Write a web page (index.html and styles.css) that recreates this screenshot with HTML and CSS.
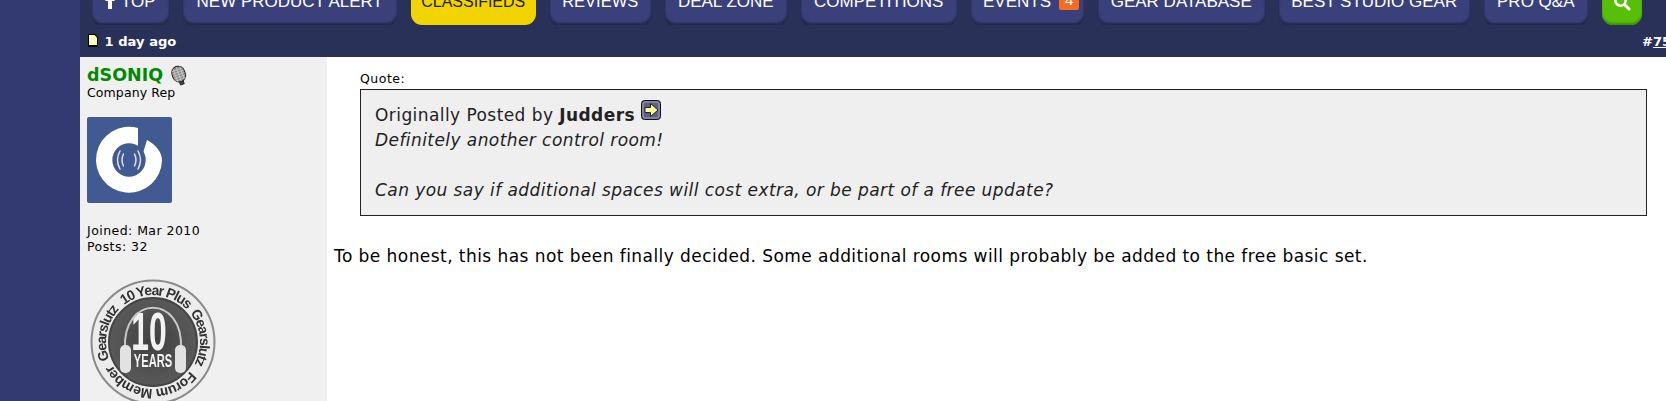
FILE: index.html
```html
<!DOCTYPE html>
<html>

<head>
  <meta charset="utf-8">
  <title>Post</title>
  <link rel="stylesheet" href="styles.css">
</head>

<body>
  <div class="page">
    <nav class="nav">
      <a class="nav-btn nav-top"><svg class="top-arrow" width="10" height="14" viewBox="0 0 10 14"><path d="M5 0 10 6H7V14H3V6H0Z" fill="#fff" /></svg> TOP</a>
      <a class="nav-btn nav-alert">NEW PRODUCT ALERT</a>
      <a class="nav-btn nav-yellow nav-class">CLASSIFIEDS</a>
      <a class="nav-btn nav-reviews">REVIEWS</a>
      <a class="nav-btn nav-deal">DEAL ZONE</a>
      <a class="nav-btn nav-comp">COMPETITIONS</a>
      <a class="nav-btn nav-events">EVENTS <span class="badge">4</span></a>
      <a class="nav-btn nav-gear">GEAR DATABASE</a>
      <a class="nav-btn nav-best">BEST STUDIO GEAR</a>
      <a class="nav-btn nav-pro">PRO Q&amp;A</a>
      <a class="nav-btn nav-search">
        <svg width="18" height="18" viewBox="0 0 18 18"><circle cx="7.5" cy="7.5" r="5.2" fill="none" stroke="#fff" stroke-width="2.6" /><path d="M11.5 11.5 16 16" stroke="#fff" stroke-width="3" stroke-linecap="round" /></svg>
      </a>
    </nav>

    <div class="post-head">
      <span class="post-date">
        <svg width="10" height="13" viewBox="0 0 10 13"><path d="M0 0H7L10 3V13H0Z" fill="#000" /><path d="M1 1H6.500L9 3.500V11H1Z" fill="#ffffb8" /></svg>
        1 day ago
      </span>
      <span class="post-num">#<a>75</a></span>
    </div>

    <div class="post-body">
      <aside class="user">
        <div class="user-name">
          <a>dSONIQ</a>
          <svg class="mic" width="18" height="21" viewBox="0 0 18 21">
            <g transform="rotate(-20 9 10)">
              <rect x="7" y="16" width="4" height="4" fill="#444" stroke="#111" stroke-width=".7" />
              <rect x="2.500" y="1" width="13" height="16" rx="6.500" fill="#8c8c8c" stroke="#222" />
              <path d="M3 4.500H15M3 7H15M3 9.500H15M3 12H15M3 14.500H15M5.500 2V16M9 1.500V16.500M12.500 2V16" stroke="#d8d8d8" stroke-width=".6" />
            </g>
          </svg>
        </div>
        <div class="user-title">Company Rep</div>
        <div class="avatar">
          <svg width="85" height="86" viewBox="0 0 85 86">
            <rect width="85" height="86" rx="2" fill="#415a92" />
            <path d="M51 11V36H56L60 23C68 27 75 35 75 43A33 33 0 1 1 51 11Z" fill="#fff" />
            <circle cx="42" cy="43" r="16.700" fill="#415a92" />
            <path d="M36.500 37Q33.500 43 36.500 49M47.500 37Q50.500 43 47.500 49M33 34Q28 43 33 52M51 34Q56 43 51 52" fill="none" stroke="#dfe4ee" stroke-width="1.500" stroke-linecap="round" />
          </svg>
        </div>
        <div class="user-stats">
          <div>Joined: Mar 2010</div>
          <div>Posts: 32</div>
        </div>
        <svg class="award" width="128" height="128" viewBox="0 0 128 128">
          <defs>
            <path id="ring" d="M64 17A47 47 0 1 1 63.990 17" />
            <filter id="soft"><feGaussianBlur stdDeviation=".45" /></filter>
            <radialGradient id="disc">
              <stop offset="0" stop-color="#3f3f3f" />
              <stop offset="1" stop-color="#5a5a5a" />
            </radialGradient>
          </defs>
          <g filter="url(#soft)">
            <circle cx="64" cy="64" r="61.500" fill="#ececec" stroke="#8a8a8a" stroke-width="2" />
            <circle cx="64" cy="64" r="44" fill="url(#disc)" stroke="#444" stroke-width="2" />
            <g transform="rotate(-38 64 64)"><text class="award-ring"><textPath href="#ring">10 Year Plus</textPath></text></g>
            <g transform="rotate(52 64 64)"><text class="award-ring"><textPath href="#ring">Gearslutz</textPath></text></g>
            <g transform="rotate(128 64 64)"><text class="award-ring award-ring-low"><textPath href="#ring">Forum Member</textPath></text></g>
            <g transform="rotate(248 64 64)"><text class="award-ring"><textPath href="#ring">Gearslutz</textPath></text></g>
            <path d="M36 71C33 16 95 16 92 71" fill="none" stroke="#c8c8c8" stroke-width="2" />
            <rect x="31" y="67" width="11" height="28" rx="5" fill="#e2e2e2" />
            <rect x="86" y="67" width="11" height="28" rx="5" fill="#e2e2e2" />
            <text class="award-ten" transform="translate(60 72) scale(.6 1)" text-anchor="middle">10</text>
            <text class="award-years" transform="translate(64 89) scale(.62 1)" text-anchor="middle">YEARS</text>
          </g>
        </svg>
      </aside>

      <main class="content">
        <div class="quote">
          <div class="quote-label">Quote:</div>
          <div class="quote-box">
            <div>Originally Posted by <b>Judders</b>
              <svg class="view-post" width="20" height="20" viewBox="0 0 20 20">
                <rect x=".5" y=".5" width="19" height="19" rx="3" fill="#5f5f82" stroke="#111" />
                <rect x="2" y="2" width="16" height="16" rx="2" fill="none" stroke="#a2a2c4" />
                <path d="M4 7.500H9.500V3.500L17 10 9.500 16.500V12.500H4Z" fill="#ffff99" stroke="#222" />
              </svg>
            </div>
            <div class="quote-text">Definitely another control room!</div>
            <br>
            <div class="quote-text">Can you say if additional spaces will cost extra, or be part of a free update?</div>
          </div>
        </div>
        <p class="message">To be honest, this has not been finally decided. Some additional rooms will probably be added to the free basic set.</p>
      </main>
    </div>
  </div>
</body>

</html>
```

FILE: styles.css
```css
body {
  margin: 0;
  overflow: hidden;
  background: linear-gradient(90deg, #333a72, #3a437f);
  font-family: "DejaVu Sans", Verdana, sans-serif;
  color: #000;
}

.page {
  margin-left: 80px;
  height: 100vh;
  display: flex;
  flex-direction: column;
  overflow: hidden;
  background: #fff;
}

/* the page is scrolled, so the buttons are cut by the top of the window */
.nav {
  flex: none;
  height: 47px;
  margin-top: -22px;
  padding-left: 12px;
  display: flex;
  gap: 14.5px;
  background: #2a3159;
}

.nav-btn {
  box-sizing: border-box;
  flex: none;
  display: flex;
  align-items: center;
  justify-content: center;
  gap: 5px;
  border-radius: 0 0 11px 11px;
  background: #3a407a;
  box-shadow: inset 0 -2px 2px #23294d, 0 1px 1px #1d2344;
  color: #fff;
  font: 17px "Liberation Sans", Arial, sans-serif;
}

.nav-top { width: 76.5px; }
.nav-alert { width: 213.5px; }
.nav-class { width: 124.5px; font-size: 16px; }
.nav-reviews { width: 100.5px; font-size: 16.500px; }
.nav-deal { width: 121.5px; }
.nav-comp { width: 155.5px; }
.nav-events { width: 112.5px; gap: 8px; padding-left: 12px; justify-content: flex-start; }
.nav-gear { width: 166.5px; }
.nav-best { width: 190.5px; }
.nav-pro { width: 103.5px; }

.nav-yellow {
  background: #f2d500;
  box-shadow: none;
  color: #222;
}

.nav-search {
  width: 40px;
  background: #58bf07;
  box-shadow: inset 0 -2px 2px #3d8f03;
}

.top-arrow {
  margin-right: 1px;
}

.badge {
  padding: 0 6px;
  height: 20px;
  margin-bottom: 4px;
  line-height: 20px;
  border-radius: 2px;
  background: #f96a23;
  font-size: 15px;
}

.post-head {
  flex: none;
  height: 32px;
  padding: 1px 0 0 8px;
  box-sizing: border-box;
  display: flex;
  align-items: center;
  justify-content: space-between;
  background: #2a3159;
  color: #fff;
  font-size: 13.100px;
  font-weight: bold;
  white-space: nowrap;
  overflow: hidden;
}

.post-date svg {
  vertical-align: -1px;
  margin-right: 2px;
}

.post-num {
  width: 24px;
  overflow: hidden;
  flex: none;
}

.post-num a {
  text-decoration: underline;
}

.post-body {
  flex: 1;
  min-height: 0;
  display: flex;
}

.user {
  width: 240px;
  flex: none;
  padding: 8px 0 0 7px;
  background: #f0f0f0;
}

.user-name {
  display: flex;
  align-items: center;
  gap: 7px;
  height: 20px;
  font-size: 17.500px;
  font-weight: bold;
  color: #008a00;
}

.user-title {
  font-size: 12.500px;
  letter-spacing: .1px;
}

.avatar {
  margin-top: 17px;
  height: 86px;
}

.user-stats {
  margin-top: 20px;
  font-size: 12.500px;
  letter-spacing: .45px;
  line-height: 16px;
}

.award {
  display: block;
  margin: 23px 0 0 2px;
}

.award-ring {
  font: bold 14px "Liberation Sans", Arial, sans-serif;
  letter-spacing: -1.200px;
  fill: #303030;
}

.award-ring-low {
  letter-spacing: -.800px;
}

.award-ten {
  font: bold 53px "Liberation Sans", Arial, sans-serif;
  fill: #f2f2f2;
}

.award-years {
  font: bold 18px "Liberation Sans", Arial, sans-serif;
  fill: #f2f2f2;
}

.content {
  flex: 1;
  min-width: 0;
  padding: 12px 19px 0 7px;
}

.quote {
  margin-left: 26px;
}

.quote-label {
  font-size: 12.500px;
  letter-spacing: .5px;
  line-height: 20px;
}

.quote-box {
  padding: 10px 14px 12px;
  border: 1px solid #222;
  background: #efefef;
  color: #222;
  font-size: 17px;
  letter-spacing: .43px;
  line-height: 25px;
}

.quote-text {
  font-style: italic;
}

.view-post {
  vertical-align: 1px;
}

.message {
  margin: 29px 0 0;
  font-size: 17px;
  letter-spacing: .44px;
  line-height: 22px;
}
```
